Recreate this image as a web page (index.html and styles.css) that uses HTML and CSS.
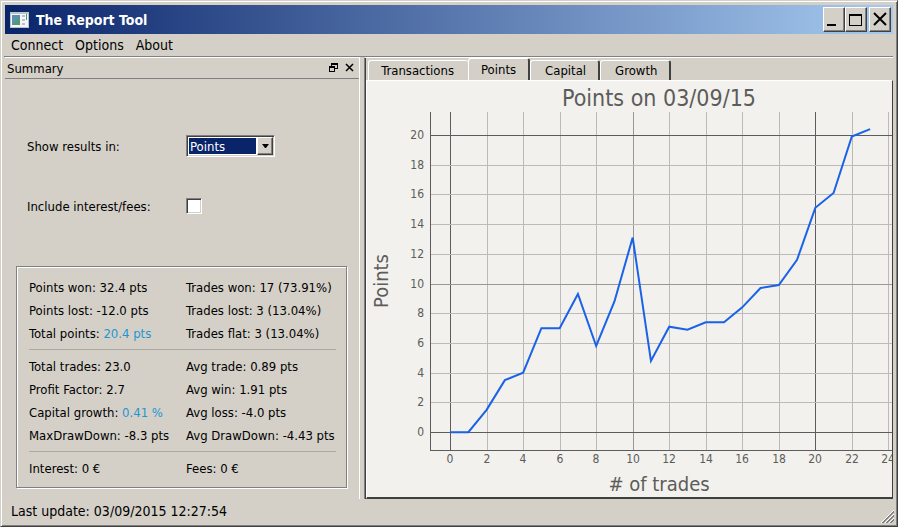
FILE: index.html
```html
<!DOCTYPE html>
<html lang="en">

<head>
    <meta charset="UTF-8">
    <meta name="viewport" content="width=device-width, initial-scale=1.0">
    <title>The Report Tool</title>
    <link rel="stylesheet" href="styles.css">
</head>

<body>
    <div class="window">
        <!-- Title bar -->
        <header class="titlebar">
            <svg class="app-icon" width="19" height="16" viewBox="0 0 19 16">
                <rect width="19" height="16" fill="#b9c4cf" />
                <rect x="1" y="2" width="17" height="13" fill="#f4f6f8" />
                <rect x="2" y="3" width="8" height="10" fill="#5b93ad" />
                <path d="M2 13L10 5V13Z" fill="#4f9a78" />
                <rect x="12" y="3" width="3" height="2" fill="#bcc2c8" />
                <rect x="12" y="7" width="3" height="2" fill="#bcc2c8" />
                <rect x="12" y="11" width="3" height="2" fill="#bcc2c8" />
                <rect x="16" y="2" width="1" height="6" fill="#4c9d6c" />
            </svg>
            <h1>The Report Tool</h1>
            <div class="window-buttons">
                <button class="window-button" aria-label="Minimize">
                    <svg width="20" height="23" viewBox="0 0 20 23"><path d="M3 16H12V18H3Z" /></svg>
                </button>
                <button class="window-button" aria-label="Maximize">
                    <svg width="20" height="23" viewBox="0 0 20 23"><path d="M3 6H16V18H3ZM4 8V17H15V8Z" fill-rule="evenodd" /></svg>
                </button>
                <button class="window-button close" aria-label="Close">
                    <svg width="20" height="23" viewBox="0 0 20 23"><path d="M4 5L16 17M16 5L4 17" stroke="#000" stroke-width="2" /></svg>
                </button>
            </div>
        </header>

        <!-- Menu -->
        <nav class="menubar">
            <button class="menu-item">Connect</button>
            <button class="menu-item">Options</button>
            <button class="menu-item">About</button>
        </nav>

        <main class="content">
            <!-- Summary dock -->
            <section class="dock">
                <div class="dock-title">
                    <h2>Summary</h2>
                    <button class="dock-button" aria-label="Float">
                        <svg width="9" height="9" viewBox="0 0 9 9" shape-rendering="crispEdges">
                            <path d="M2 0H9V6H6V9H0V3H2ZM3 2V3H6V5H8V2ZM1 5V8H5V5Z" fill-rule="evenodd" />
                        </svg>
                    </button>
                    <button class="dock-button" aria-label="Close summary">
                        <svg width="9" height="9" viewBox="0 0 9 9"><path d="M1 1L8 8M8 1L1 8" stroke="#000" stroke-width="1.5" /></svg>
                    </button>
                </div>

                <div class="options">
                    <label for="unit">Show results in:</label>
                    <div class="combo">
                        <select id="unit">
                            <option>Points</option>
                            <option>Percent</option>
                        </select>
                        <span class="combo-arrow">
                            <svg width="7" height="4" viewBox="0 0 7 4"><path d="M0 0H7L4 4H3Z" /></svg>
                        </span>
                    </div>
                    <label for="fees">Include interest/fees:</label>
                    <input type="checkbox" id="fees">
                </div>

                <div class="stats">
                    <div class="stats-group">
                        <span>Points won: 32.4 pts</span>
                        <span>Trades won: 17 (73.91%)</span>
                        <span>Points lost: -12.0 pts</span>
                        <span>Trades lost: 3 (13.04%)</span>
                        <span>Total points: <b>20.4 pts</b></span>
                        <span>Trades flat: 3 (13.04%)</span>
                    </div>
                    <div class="stats-group">
                        <span>Total trades: 23.0</span>
                        <span>Avg trade: 0.89 pts</span>
                        <span>Profit Factor: 2.7</span>
                        <span>Avg win: 1.91 pts</span>
                        <span>Capital growth: <b>0.41 %</b></span>
                        <span>Avg loss: -4.0 pts</span>
                        <span>MaxDrawDown: -8.3 pts</span>
                        <span>Avg DrawDown: -4.43 pts</span>
                    </div>
                    <div class="stats-group">
                        <span>Interest: 0 €</span>
                        <span>Fees: 0 €</span>
                    </div>
                </div>
            </section>

            <!-- Charts -->
            <section class="charts">
                <div class="tabs" role="tablist">
                    <button class="tab" role="tab" aria-selected="false">Transactions</button>
                    <button class="tab active" role="tab" aria-selected="true">Points</button>
                    <button class="tab" role="tab" aria-selected="false">Capital</button>
                    <button class="tab" role="tab" aria-selected="false">Growth</button>
                </div>
                <div class="chart-pane" id="pane">
                    <svg class="chart" id="chart"></svg>
                </div>
            </section>
        </main>

        <footer class="statusbar">
            <span>Last update: 03/09/2015 12:27:54</span>
            <svg width="13" height="13" viewBox="0 0 13 13">
                <path d="M0 13L13 0M4 13L13 4M8 13L13 8" stroke="#fff" />
                <path d="M1 13L13 1M2 13L13 2M5 13L13 5M6 13L13 6M9 13L13 9M10 13L13 10" stroke="#808080" />
            </svg>
        </footer>
    </div>

    <script>
        const points = [0, 0, 1.5, 3.5, 4, 7, 7, 9.3, 5.8, 8.8, 13.1, 4.8,
            7.1, 6.9, 7.4, 7.4, 8.4, 9.7, 9.9, 11.6, 15.1, 16.1, 19.9, 20.4];

        function addShape(name, attributes, text) {
            const el = document.createElementNS("http://www.w3.org/2000/svg", name);
            for (const key in attributes) {
                el.setAttribute(key, attributes[key]);
            }
            if (text !== undefined) {
                el.textContent = text;
            }
            document.getElementById("chart").appendChild(el);
        }

        // every 20 is a main line, every 10 a bit darker than the rest
        function gridClass(value) {
            if (value % 20 === 0) return "grid main";
            if (value % 10 === 0) return "grid mid";
            return "grid";
        }

        function drawChart() {
            const pane = document.getElementById("pane");
            const width = pane.clientWidth;
            const height = pane.clientHeight;
            const left = 63;
            const top = 31;
            const bottom = height - 47;
            const stepX = (width - left) / 25.3;
            const stepY = (bottom - top) / 22.75;
            const x = value => left + (value + 1.1) * stepX;
            const y = value => bottom - (value + 1.2) * stepY;

            document.getElementById("chart").innerHTML = "";

            for (let i = 0; i <= 24; i += 2) {
                const px = Math.round(x(i));
                addShape("line", { class: gridClass(i), x1: px, x2: px, y1: top, y2: bottom });
                addShape("text", { class: "tick", x: px, y: bottom + 13, "text-anchor": "middle" }, i);
            }
            for (let i = 0; i <= 20; i += 2) {
                const py = Math.round(y(i));
                addShape("line", { class: gridClass(i), x1: left, x2: width, y1: py, y2: py });
                addShape("text", { class: "tick", x: left - 6, y: py + 4, "text-anchor": "end" }, i);
            }
            addShape("path", { class: "axis", d: `M${left} ${top}V${bottom}H${width}` });

            const line = points.map((value, i) => x(i) + "," + y(value)).join(" ");
            addShape("polyline", { class: "series", points: line });

            const middleX = (left + width) / 2 - 2;
            const middleY = (top + bottom) / 2;
            addShape("text", { class: "chart-title", x: middleX, y: 25, "text-anchor": "middle" }, "Points on 03/09/15");
            addShape("text", { class: "axis-title", x: middleX, y: height - 6, "text-anchor": "middle" }, "# of trades");
            addShape("text", { class: "axis-title", transform: `translate(21 ${middleY}) rotate(-90)`, "text-anchor": "middle" }, "Points");
        }

        drawChart();
        window.addEventListener("resize", drawChart);
    </script>
</body>

</html>
```

FILE: styles.css
```css
* {
    box-sizing: border-box;
}

body {
    margin: 0;
    height: 100vh;
    background-color: #d4d0c8;
    font-family: "DejaVu Sans Condensed", "DejaVu Sans", sans-serif;
    font-size: 13px;
    color: #000;
}

button,
select {
    font: inherit;
    color: inherit;
}

h1,
h2 {
    margin: 0;
}

.window {
    display: flex;
    flex-direction: column;
    height: 100%;
    padding: 3px;
    border: 1px solid;
    border-color: #d4d0c8 #404040 #404040 #d4d0c8;
    box-shadow: inset 1px 1px #fff, inset -1px -1px #808080;
}

/* Title bar */
.titlebar {
    display: flex;
    align-items: center;
    height: 29px;
    margin: 1px 1px 0;
    padding: 0 2px 0 5px;
    background: linear-gradient(to right, #0a246a, #a6caf0);
    color: #fff;
}

.titlebar h1 {
    flex: 1;
    margin-left: 7px;
    font-size: 14px;
    font-weight: bold;
}

.window-buttons {
    display: flex;
}

.window-button {
    width: 22px;
    height: 25px;
    padding: 0;
    border: 1px solid;
    border-color: #fff #404040 #404040 #fff;
    background-color: #d4d0c8;
    box-shadow: inset -1px -1px #808080;
}

.window-button.close {
    margin-left: 2px;
}

.window-button svg,
.dock-button svg {
    display: block;
}

/* Menu */
.menubar {
    display: flex;
    gap: 12px;
    height: 23px;
    margin-right: 1px;
    padding: 0 7px;
    border-bottom: 1px solid #808080;
}

.menu-item {
    padding: 0;
    border: none;
    background: none;
    font-size: 14px;
}

.content {
    display: flex;
    flex: 1;
    min-height: 0;
    padding: 0 1px;
}

/* Summary dock */
.dock {
    display: flex;
    flex-direction: column;
    flex: 0 0 40%;
    border-top: 1px solid #fff;
    border-right: 1px solid #fff;
}

.dock-title {
    display: flex;
    align-items: center;
    gap: 7px;
    height: 21px;
    padding: 0 5px 0 2px;
    border-bottom: 1px solid #808080;
}

.dock-title h2 {
    flex: 1;
    font-size: 13px;
    font-weight: normal;
}

.dock-button {
    padding: 0 0 2px;
    border: none;
    background: none;
}

.options {
    display: grid;
    grid-template-columns: 159px 1fr;
    grid-auto-rows: 60px;
    align-items: center;
    padding: 37px 22px 30px;
}

.combo {
    position: relative;
    width: 89px;
    height: 22px;
    padding: 1px;
    border: 1px solid;
    border-color: #808080 #fff #fff #808080;
    background-color: #fff;
    box-shadow: inset 1px 1px #404040, inset -1px -1px #d4d0c8;
}

.combo select {
    display: block;
    width: 100%;
    height: 100%;
    padding: 0 1px;
    border: 1px solid #fff;
    border-right: 17px solid #fff;
    border-radius: 0;
    appearance: none;
    background-color: #0a246a;
    color: #fff;
    outline: none;
}

.combo-arrow {
    position: absolute;
    top: 1px;
    right: 1px;
    bottom: 1px;
    display: flex;
    align-items: center;
    justify-content: center;
    width: 16px;
    border: 1px solid;
    border-color: #fff #404040 #404040 #fff;
    background-color: #d4d0c8;
    box-shadow: inset -1px -1px #808080;
    pointer-events: none;
}

.options input {
    width: 16px;
    height: 16px;
    margin: 0;
    border: 1px solid;
    border-color: #808080 #fff #fff #808080;
    appearance: none;
    background-color: #fff;
    box-shadow: inset 1px 1px #404040, inset -1px -1px #d4d0c8;
}

.options input:checked {
    background-color: #0a246a;
}

.stats {
    margin: 0 12px 0 11px;
    padding: 9px 10px 7px 12px;
    border: 1px solid #808080;
    box-shadow: inset 1px 1px #fff, 1px 1px #fff;
}

.stats-group {
    display: grid;
    grid-template-columns: 157px 1fr;
    line-height: 23px;
    white-space: nowrap;
}

.stats-group + .stats-group {
    margin-top: 4px;
    padding-top: 5px;
    border-top: 1px solid #aca8a2;
}

.stats b {
    font-weight: normal;
    color: #1e96d2;
}

/* Charts */
.charts {
    display: flex;
    flex-direction: column;
    flex: 1;
    min-width: 0;
    margin-left: 4px;
    border-left: 1px solid #808080;
    border-top: 1px solid #fff;
    box-shadow: inset 1px 0 #404040;
}

.tabs {
    display: flex;
    align-items: flex-end;
    height: 22px;
    padding-left: 3px;
}

.tab {
    height: 20px;
    padding: 0 12px 0 14px;
    border: 1px solid #fff;
    border-bottom: none;
    border-right: 2px solid #404040;
    border-radius: 3px 3px 0 0;
    background-color: #d4d0c8;
}

.tab:first-child {
    padding: 0 14px 0 12px;
    border-right: none;
}

.tab.active {
    height: 22px;
    padding: 0 12px 1px;
}

.chart-pane {
    flex: 1;
    min-height: 0;
    margin-left: 1px;
    border: 1px solid;
    border-color: #fff #404040 #404040 #fff;
    border-bottom-width: 2px;
    background-color: #f2f1ed;
    overflow: hidden;
}

.chart {
    display: block;
    width: 100%;
    height: 100%;
}

.grid {
    stroke: #bcbbb8;
    shape-rendering: crispEdges;
}

.grid.mid {
    stroke: #999895;
}

.grid.main {
    stroke: #5c5c5a;
}

.axis {
    fill: none;
    stroke: #5c5c5a;
    shape-rendering: crispEdges;
}

.series {
    fill: none;
    stroke: #1a62e8;
    stroke-width: 2;
}

.tick {
    font-size: 12px;
    fill: #5c5c5a;
}

.chart-title {
    font-size: 23px;
    fill: #5c5c5a;
}

.axis-title {
    font-size: 20px;
    fill: #5c5c5a;
}

/* Status bar */
.statusbar {
    display: flex;
    align-items: center;
    justify-content: space-between;
    height: 24px;
    padding-left: 7px;
    font-size: 14px;
}

.statusbar svg {
    align-self: flex-end;
}
```
